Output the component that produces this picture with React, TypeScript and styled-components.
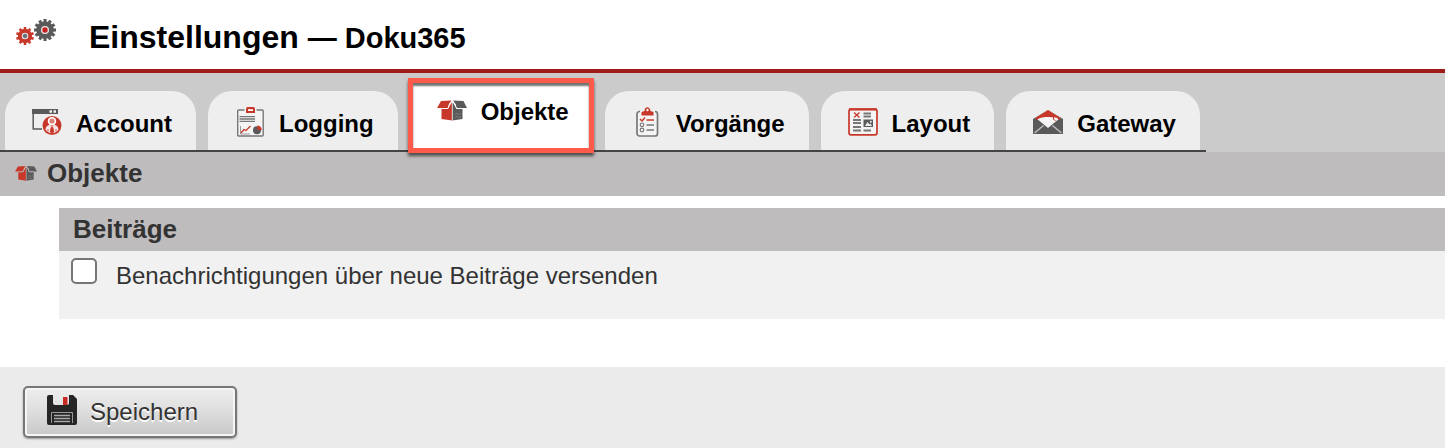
import React from 'react';
import styled, { createGlobalStyle } from 'styled-components';

const RED = '#c8382a';
const GREY = '#5a5a5a';

const GlobalStyle = createGlobalStyle`
  * { box-sizing: border-box; }
  body {
    margin: 0;
    background: #fff;
    color: #333;
    font-family: Arial, "Liberation Sans", sans-serif;
    font-size: 24px;
    line-height: 28px;
  }
`;

const Header = styled.header`
  display: flex;
  align-items: flex-start;
  gap: 32px;
  padding: 16px 15px 12px;
  border-bottom: 4px solid #9e1b17;
`;

const Title = styled.h1`
  margin: 0;
  padding-top: 2px;
  color: #000;
  font-size: 32px;
  line-height: 38px;
`;

const Subtitle = styled.span`
  font-size: 29px;
`;

const TabStrip = styled.nav`
  display: flex;
  padding-top: 6px;
  background: #cbcbcb;
`;

const TabList = styled.div`
  display: flex;
  align-items: flex-end;
  gap: 12px;
  padding: 0 6px 0 5px;
  border-bottom: 2px solid #444;
`;

const Tab = styled.button<{ $active: boolean }>`
  position: relative;
  display: flex;
  align-items: center;
  gap: 14px;
  padding: ${p => (p.$active ? '19px 24px 24px 27px' : '19px 24px 12px 27px')};
  border: 0;
  border-radius: ${p => (p.$active ? '12px 12px 0 0' : '24px 24px 0 0')};
  background: ${p => (p.$active ? '#fff' : '#eee')};
  color: #000;
  font: bold 24px/28px Arial, "Liberation Sans", sans-serif;
  cursor: pointer;

  svg { margin: -3px 0 1px; flex: none; }
`;

const Highlight = styled.span`
  position: absolute;
  inset: -1px -1px -3px -2px;
  border: 5px solid #ff5a4a;
  box-shadow: 0 3px 3px rgba(0, 0, 0, 0.6), inset 0 3px 2px rgba(0, 0, 0, 0.55);
  pointer-events: none;
`;

const SectionBar = styled.h2`
  display: flex;
  align-items: center;
  gap: 10px;
  margin: 0;
  padding: 6px 15px 8px;
  background: #bfbcbd;
  font-size: 26px;
  line-height: 30px;
`;

const Panel = styled.section`
  margin: 12px 0 48px 59px;
  background: #f1f1f1;
`;

const PanelTitle = styled.h3`
  margin: 0;
  padding: 6px 14px 7px;
  background: #bfbcbd;
  font-size: 26px;
  line-height: 30px;
`;

const Option = styled.label`
  display: flex;
  align-items: flex-start;
  gap: 19px;
  padding: 7px 12px 29px;
`;

const OptionText = styled.span`
  padding-top: 4px;
`;

const Checkbox = styled.input`
  appearance: none;
  flex: none;
  width: 26px;
  height: 26px;
  margin: 0;
  border: 2px solid #767676;
  border-radius: 5px;
  background: #fff;

  &:checked { background: ${RED}; }
`;

const Footer = styled.footer`
  padding: 19px 23px 10px;
  background: #ebebeb;
`;

const SaveButton = styled.button`
  display: flex;
  align-items: center;
  gap: 12px;
  padding: 8px 37px 8px 21px;
  border: 2px solid #777;
  border-radius: 5px;
  background: linear-gradient(#eee, #ddd 50%, #c8c8c8);
  box-shadow: inset 0 0 0 2px #f5f5f5, 0 1px 2px rgba(0, 0, 0, 0.35);
  color: #333;
  font: 24px/32px Arial, "Liberation Sans", sans-serif;
  text-shadow: 0 2px 0 #fff;
  cursor: pointer;

  svg { margin: -2px 0 2px; flex: none; }
`;

type GearProps = { cx: number; cy: number; r: number; color: string; dot: string; teeth: number };

function Gear({ cx, cy, r, color, dot, teeth }: GearProps) {
  return (
    <g transform={`translate(${cx} ${cy})`}>
      {Array.from({ length: teeth }, (_, i) => (
        <rect key={i} x={-r * 0.14} y={-r} width={r * 0.28} height={r * 0.4} fill={color} transform={`rotate(${(i * 360) / teeth})`} />
      ))}
      <circle r={r * 0.57} fill="none" stroke={color} strokeWidth={r * 0.45} />
      <circle r={r * 0.36} fill="#ddd" />
      <circle r={r * 0.24} fill={dot} />
    </g>
  );
}

const GearsIcon = () => (
  <svg width="42" height="30" viewBox="0 0 42 30" aria-hidden="true">
    <Gear cx={10} cy={20} r={9} color={RED} dot="#687078" teeth={10} />
    <Gear cx={30} cy={14} r={11} color={GREY} dot="#c81e1e" teeth={12} />
  </svg>
);

const AccountIcon = () => (
  <svg width="30" height="30" viewBox="0 0 30 30" aria-hidden="true">
    <path d="M1.2 6V22H10" fill="none" stroke={GREY} strokeWidth="1.5" />
    <path d="M0 2h26v5H0z" fill={GREY} />
    <path d="M17.5 3.3h2.5v2.5h-2.5zM21.5 3.3H24v2.5h-2.5z" fill="#f4f4f4" />
    <circle cx="20" cy="18.5" r="9.5" fill={RED} />
    <circle cx="20" cy="14.2" r="4.2" fill="#fff" />
    <circle cx="20" cy="14" r="2.6" fill="#dc8278" />
    <path d="M13.5 22.5c.3-3 2-4.500 4.500-4.500l2 1.500 2-1.500c2.500 0 4.200 1.500 4.500 4.500-1.500 2.500-4 3.800-6.500 3.800s-5-1.300-6.500-3.800z" fill="#f7e7e4" />
    <path d="M20 19.500l1 1.500.8 4-1.800 1.500-1.800-1.500.8-4zM16 22v2.500M24 22v2.500" fill={RED} stroke={RED} strokeWidth=".8" />
  </svg>
);

const LoggingIcon = () => (
  <svg width="30" height="30" viewBox="0 0 30 30" aria-hidden="true">
    <rect x="2.7" y="3" width="25.5" height="26" rx="1" fill="#f4f4f4" stroke="#777" strokeWidth="1.4" />
    <path d="M9.5 2h12v3.5h-12z" fill="#f4f4f4" />
    <path d="M11 1.500l1-1.500h7l1 1.500V6h-9z" fill={RED} />
    <path d="M13 2.200h5v1.800h-5z" fill="#fff" />
    <path d="M4.500 9.700H20M4.500 12H20M4.500 14.300H20" stroke="#777" strokeWidth="1.3" />
    <path d="M5.500 19v8H15" fill="none" stroke="#999" />
    <path d="M6 26l3-3.500 2 1L15.500 19" fill="none" stroke={RED} strokeWidth="1.3" />
    <circle cx="22" cy="23.3" r="4" fill={GREY} />
    <path d="M22.300 23V18.500a4.500 4.500 0 0 1 4.500 4.500z" fill={RED} />
  </svg>
);

const BoxIcon = ({ size = 30, gap = '#fff' }: { size?: number; gap?: string }) => (
  <svg width={size} height={size} viewBox="0 0 30 30" aria-hidden="true">
    <path d="M4.5 13.500V24l10.800 1.500V6.500L11 13.500z" fill={RED} />
    <path d="M25.500 13.500V24l-10.200 1.500V6.500L19.500 13.500z" fill={GREY} />
    <path d="M4 6l10.500-.5q-3 3-3.500 7.500H0z" fill={RED} />
    <path d="M26.500 6L16 5.500q3 3 3.500 7.500H30z" fill={GREY} />
    <path d="M5 13.500h6q1-5 4.300-7.500 3.200 2.500 4.200 7.500h6" fill="none" stroke={gap} strokeWidth="1" />
    <path d="M15.300 7v18.500" stroke={gap} strokeWidth=".7" />
    <path d="M18 20l2-2 2 2 2-2M18 23l2-2 2 2 2-2" fill="none" stroke="#858585" strokeWidth=".7" />
  </svg>
);

const TasksIcon = () => (
  <svg width="30" height="30" viewBox="0 0 30 30" aria-hidden="true">
    <rect x="5" y="4.5" width="20.5" height="24.5" rx="2.5" fill="#f4f4f4" stroke="#777" strokeWidth="1.7" />
    <path d="M8 3h15v5H8z" fill="#f1f1f1" />
    <path d="M9.500 8.500V5l3-1c0-5 5.500-5 6 0l3 1v3.500z" fill={RED} />
    <circle cx="15.5" cy="3" r="1.2" fill="#fff" />
    <path d="M8 12l2 2 3-3.500M14.500 13H22" fill="none" stroke={RED} strokeWidth="1.5" />
    <path d="M14.500 18H22M14.500 23H22" stroke="#777" strokeWidth="1.5" />
    <circle cx="10" cy="17.8" r="1.8" fill="none" stroke="#777" strokeWidth="1.2" />
    <circle cx="10" cy="23" r="1.8" fill="none" stroke="#777" strokeWidth="1.2" />
  </svg>
);

const LayoutIcon = () => (
  <svg width="30" height="30" viewBox="0 0 30 30" aria-hidden="true">
    <rect x="1" y="2.3" width="28" height="25.5" rx="2" fill="#f4f4f4" stroke={RED} strokeWidth="1.7" />
    <path d="M1 2.300h28" stroke={RED} strokeWidth="2.2" />
    <path d="M6 5.500l5.500 5M11.500 5.500L6 10.500" stroke={RED} strokeWidth="1.3" />
    <path d="M15.500 6.500H23M15.500 9.500H23M5 13h8M5 16h8M5 20h8M5 23.500h8M15.500 23.500H23" stroke="#777" strokeWidth="1.9" />
    <path d="M15.500 12.500H25V20h-9.500z" fill={GREY} />
    <path d="M17 19l2.500-4 2 2.500 1-1 1.500 2.500z" fill="#eee" />
    <circle cx="22.8" cy="14.7" r="1" fill="#eee" />
  </svg>
);

const MailIcon = () => (
  <svg width="30" height="30" viewBox="0 0 30 30" aria-hidden="true">
    <path d="M0 12L15 3l15 9v15H0z" fill={GREY} />
    <path d="M3 11L15 3l12 8-12 10z" fill="#f5f5f5" />
    <path d="M2.500 11L15 3l12.500 8-1 2.500C24 9 20 10.500 15 10c-4 0-7 0-11.500 3z" fill={RED} />
    <path d="M20.500 9.500v3l2 1" fill="none" stroke={RED} />
    <path d="M1.500 26l9-7.500M28.500 26l-9-7.500" stroke="#c5c5c5" strokeWidth="1.2" />
  </svg>
);

const SaveIcon = () => (
  <svg width="32" height="32" viewBox="0 0 32 32" aria-hidden="true">
    <path d="M3 1h4v8q0 2 2 2h12q2 0 2-2V1h4l4 4v24q0 2-2 2H3q-2 0-2-2V3q0-2 2-2z" fill="#252525" />
    <path d="M17 3h4.500v8H17z" fill="#c72b23" />
    <path d="M5.500 29V18.500h21V29" fill="none" stroke="#999" />
    <path d="M8 21.500h16M8 24.500h16M8 27.500h16" stroke="#aaa" strokeWidth="1.7" />
  </svg>
);

const tabs = [
  { label: 'Account', Icon: AccountIcon },
  { label: 'Logging', Icon: LoggingIcon },
  { label: 'Objekte', Icon: BoxIcon, active: true },
  { label: 'Vorgänge', Icon: TasksIcon },
  { label: 'Layout', Icon: LayoutIcon },
  { label: 'Gateway', Icon: MailIcon },
];

export default function App() {
  return (
    <>
      <GlobalStyle />
      <Header>
        <GearsIcon />
        <Title>
          Einstellungen <Subtitle>— Doku365</Subtitle>
        </Title>
      </Header>
      <TabStrip>
        <TabList role="tablist">
          {tabs.map(({ label, Icon, active = false }) => (
            <Tab key={label} type="button" role="tab" aria-selected={active} $active={active}>
              <Icon />
              {label}
              {active && <Highlight />}
            </Tab>
          ))}
        </TabList>
      </TabStrip>
      <main>
        <SectionBar>
          <BoxIcon size={22} gap="#bfbcbd" />
          Objekte
        </SectionBar>
        <Panel>
          <PanelTitle>Beiträge</PanelTitle>
          <Option>
            <Checkbox type="checkbox" />
            <OptionText>Benachrichtigungen über neue Beiträge versenden</OptionText>
          </Option>
        </Panel>
      </main>
      <Footer>
        <SaveButton type="button">
          <SaveIcon />
          Speichern
        </SaveButton>
      </Footer>
    </>
  );
}
